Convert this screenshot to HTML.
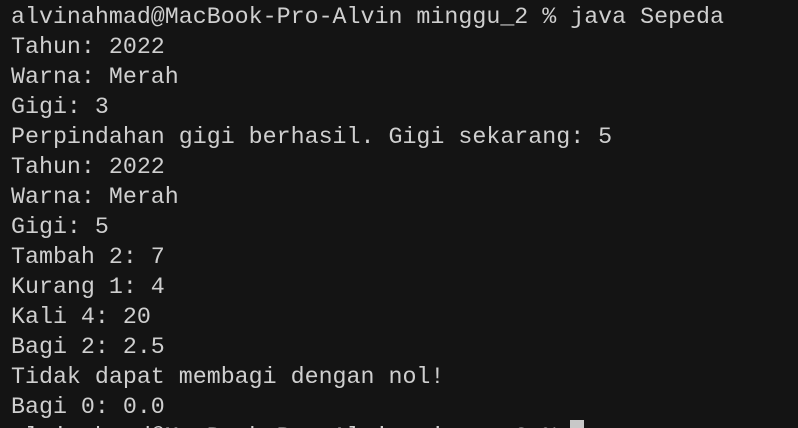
<!DOCTYPE html>
<html><head><meta charset="utf-8"><style>
html,body{margin:0;padding:0;width:798px;height:428px;overflow:hidden;background:#141414;}
#w{position:relative;width:798px;height:428px;overflow:hidden;background:#141414;}
pre{margin:0;position:absolute;left:11px;top:2px;height:426px;overflow:hidden;font-family:"Liberation Mono",monospace;font-size:23.3px;line-height:30px;color:#cfcfcf;white-space:pre;}
.cur{position:absolute;left:570px;top:420px;width:14px;height:8px;background:#c8c8c8;}
</style></head><body><div id="w">
<pre>alvinahmad@MacBook-Pro-Alvin minggu_2 % java Sepeda
Tahun: 2022
Warna: Merah
Gigi: 3
Perpindahan gigi berhasil. Gigi sekarang: 5
Tahun: 2022
Warna: Merah
Gigi: 5
Tambah 2: 7
Kurang 1: 4
Kali 4: 20
Bagi 2: 2.5
Tidak dapat membagi dengan nol!
Bagi 0: 0.0
alvinahmad@MacBook-Pro-Alvin minggu_2 % </pre>
<div class="cur"></div>
</div></body></html>
